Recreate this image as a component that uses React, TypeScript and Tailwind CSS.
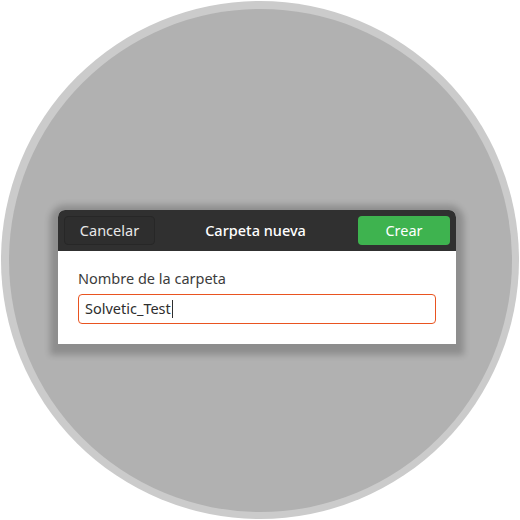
import React from 'react';

const FONT = { fontFamily: '"Noto Sans", "Open Sans", sans-serif' };

export default function App() {
  return (
    <div className="w-[520px] h-[520px] bg-white flex items-center justify-center" style={FONT}>
      <div className="w-[518px] h-[518px] rounded-full bg-[#cbcbcb] flex items-center justify-center">
        <div className="w-[503px] h-[503px] rounded-full bg-[#b1b1b1] flex items-center justify-center">
          <div className="mt-[34px] mr-[6px] w-[398px] rounded-t-[7px] overflow-hidden bg-white shadow-[0_3px_6px_8px_rgba(0,0,0,0.2)]">
            <div className="h-[41px] bg-[#303030] flex items-center justify-between px-[6px]">
              <button className="w-[91px] h-[29px] rounded-[4px] border border-[#272727] bg-[#2e2e2e] text-[14.5px] text-[#e8e8e8]">
                Cancelar
              </button>
              <span className="text-[14.5px] font-medium text-white -ml-[2px]">Carpeta nueva</span>
              <button className="w-[92px] h-[29px] rounded-[4px] bg-[#3eb34f] text-[14.5px] text-white">
                Crear
              </button>
            </div>
            <div className="px-[20px] pt-[17px] pb-[20px]">
              <div className="text-[14.5px] leading-[20px] text-[#3c3c3c]">Nombre de la carpeta</div>
              <div className="mt-[6px] h-[30px] rounded-[4px] border border-[#e95420] flex items-center px-[6px] text-[14.5px] text-[#2e2e2e]">
                Solvetic_Test
                <span className="ml-[1px] w-px h-[18px] bg-[#2e2e2e]" />
              </div>
            </div>
          </div>
        </div>
      </div>
    </div>
  );
}
